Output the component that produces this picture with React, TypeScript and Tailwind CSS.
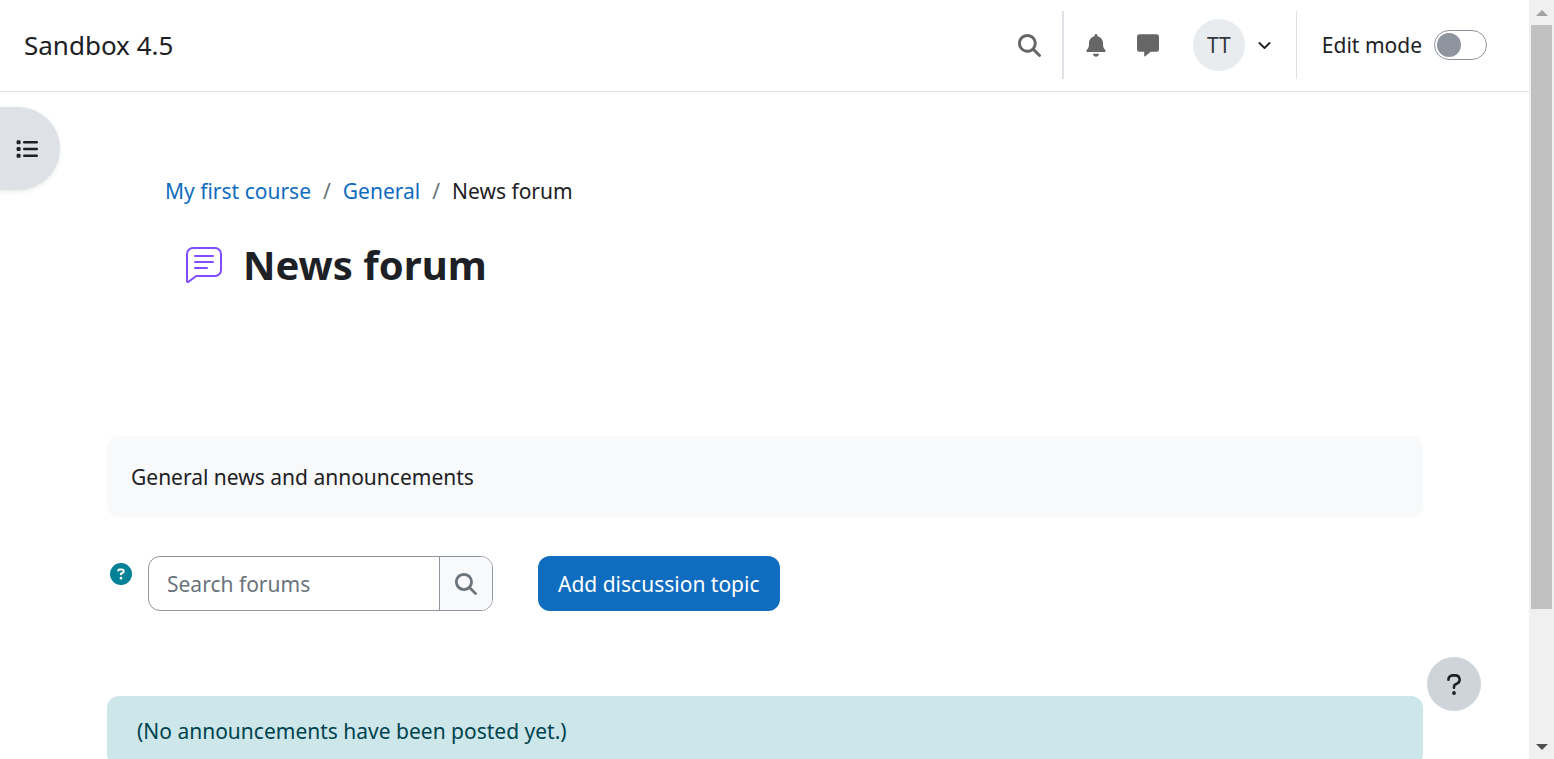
import { FaCircleQuestion, FaMagnifyingGlass } from "react-icons/fa6";

function BellIcon() {
  return (
    <svg viewBox="0 0 24 23" className="h-[23px] w-6" fill="currentColor">
      <path d="M12 0c.8 0 1.400.6 1.400 1.400v.8c3.300.7 5.600 3.500 5.600 6.900v1.700c0 2.100.8 3.600 2.200 5.200.9 1 .4 2.100-.7 2.100h-17c-1.100 0-1.600-1.100-.7-2.100C4.200 14.400 5 12.900 5 10.800V9.100c0-3.400 2.300-6.200 5.600-6.900v-.8C10.600.6 11.200 0 12 0Z" />
      <path d="M9 19.800h6c0 1.700-1.300 2.900-3 2.900s-3-1.200-3-2.900Z" />
    </svg>
  );
}

function MessageIcon() {
  return (
    <svg viewBox="0 0 24 23" className="h-[23px] w-6" fill="currentColor">
      <path d="M3.500.3h17A2.500 2.500 0 0 1 23 2.800v12.400a2.500 2.500 0 0 1-2.500 2.500h-5.800l-5.500 4.500c-.6.500-1 .2-1-.4v-4.100H3.500A2.500 2.500 0 0 1 1 15.200V2.800A2.500 2.500 0 0 1 3.500.3Z" />
    </svg>
  );
}

function ListIcon() {
  return (
    <svg viewBox="0 0 22 18" className="h-[18px] w-[22px]" fill="currentColor">
      <rect x="0.600" y="0.200" width="4" height="4" rx="1.200" />
      <rect x="0.600" y="7" width="4" height="4" rx="1.200" />
      <rect x="0.600" y="13.800" width="4" height="4" rx="1.200" />
      <rect x="7" y="1" width="15" height="2.400" rx="1.200" />
      <rect x="7" y="7.800" width="15" height="2.400" rx="1.200" />
      <rect x="7" y="14.600" width="15" height="2.400" rx="1.200" />
    </svg>
  );
}

function UserMenu() {
  return (
    <button type="button" aria-label="User menu" className="flex items-center gap-[13px]">
      <span className="flex size-[52px] items-center justify-center rounded-full bg-[#e9ecef] text-[#343a40]">TT</span>
      <svg viewBox="0 0 13 9" className="h-[9px] w-[13px]" fill="none" stroke="#1d2125" strokeWidth="1.800" strokeLinecap="round" strokeLinejoin="round">
        <path d="M1.400 2 6.500 7l5.100-5" />
      </svg>
    </button>
  );
}

function Header() {
  return (
    <header className="flex h-[92px] shrink-0 items-center border-b border-[#dee2e6] pr-[42px] pb-px pl-6">
      <a href="#home" className="text-[26px]">Sandbox 4.5</a>
      <div className="ml-auto flex h-[68px] items-center">
        <button type="button" aria-label="Search" className="pr-[21px] text-[23px] text-[#666]">
          <FaMagnifyingGlass />
        </button>
        <div className="flex h-full items-center border-l-2 border-[#dee2e6] pr-[25px] pl-5 text-[#666]">
          <button type="button" aria-label="Notifications">
            <BellIcon />
          </button>
          <button type="button" aria-label="Messages" className="mr-[33px] ml-7">
            <MessageIcon />
          </button>
          <UserMenu />
        </div>
        <label className="flex h-full items-center gap-3 border-l border-[#dee2e6] pl-[25px]">
          <span>Edit mode</span>
          <span className="relative flex">
            <input type="checkbox" role="switch" className="peer h-[30px] w-[53px] appearance-none rounded-full border border-[#8f959e] bg-white" />
            <span className="absolute top-[3px] left-[3px] size-6 rounded-full bg-[#8f959e] peer-checked:left-[26px]" />
          </span>
        </label>
      </div>
    </header>
  );
}

function Breadcrumb() {
  return (
    <nav aria-label="Breadcrumb">
      <ol className="flex gap-3">
        <li><a href="#course" className="text-[#0f6cbf]">My first course</a></li>
        <li aria-hidden="true" className="text-[#6a737b]">/</li>
        <li><a href="#general" className="text-[#0f6cbf]">General</a></li>
        <li aria-hidden="true" className="text-[#6a737b]">/</li>
        <li>News forum</li>
      </ol>
    </nav>
  );
}

function ForumIcon() {
  return (
    <svg viewBox="0 0 36 36" className="size-9" fill="none" stroke="#7f4dff" strokeWidth="2" strokeLinecap="round" strokeLinejoin="round">
      <path d="M1 34V7a6 6 0 0 1 6-6h22a6 6 0 0 1 6 6v16a6 6 0 0 1-6 6H11a3 3 0 0 0-1.900.7l-6.500 5.100c-.7.600-1.600.300-1.600-.8Z" />
      <path d="M9 9h18M9 15h18M9 21h12" />
    </svg>
  );
}

function QuestionMark() {
  return (
    <svg viewBox="0 0 14 21" className="h-[21px] w-[14px]" fill="none" stroke="currentColor" strokeWidth="2.600" strokeLinecap="round" strokeLinejoin="round">
      <path d="M1.400 5.800A4.300 4.300 0 0 1 5.700 1.400h2.600a4.200 4.200 0 0 1 2.100 7.900L8.100 10.700A2.200 2.200 0 0 0 7 12.600v1.200" />
      <circle cx="7" cy="19" r="1.900" fill="currentColor" stroke="none" />
    </svg>
  );
}

function ForumTools() {
  return (
    <div className="mt-[39px] flex items-start">
      <button type="button" aria-label="Help with Search" className="mt-[7px] ml-[3px] text-[22px] text-[#008196]">
        <FaCircleQuestion />
      </button>
      <form className="ml-4 flex h-[55px] w-[345px] overflow-hidden rounded-xl border border-[#8f959e]">
        <input type="text" aria-label="Search forums" placeholder="Search forums" className="min-w-0 flex-1 px-[18px] outline-none placeholder:text-[#6a737b]" />
        <button type="button" aria-label="Search forums" className="flex w-[53px] items-center justify-center border-l border-[#8f959e] bg-[#f8f9fa] text-[22px] text-[#6a737b]">
          <FaMagnifyingGlass />
        </button>
      </form>
      <button type="button" className="ml-[45px] h-[55px] rounded-xl bg-[#0f6cbf] px-5 text-white">Add discussion topic</button>
    </div>
  );
}

function Scrollbar() {
  return (
    <div aria-hidden="true" className="flex w-[25px] shrink-0 flex-col items-center bg-[#f0f0f0]">
      <div className="flex h-[25px] shrink-0 items-center">
        <svg viewBox="0 0 12 6" className="h-[6px] w-3" fill="#a3a3a3"><path d="M6 0l6 6H0z" /></svg>
      </div>
      <div className="h-[77%] w-[21px] bg-[#c1c1c1]" />
      <div className="mt-auto flex h-[25px] shrink-0 items-center">
        <svg viewBox="0 0 12 6" className="h-[6px] w-3" fill="#505050"><path d="M0 0h12L6 6z" /></svg>
      </div>
    </div>
  );
}

export default function App() {
  return (
    <div className="flex h-screen overflow-hidden bg-white font-['Segoe_UI','Noto_Sans',sans-serif] text-[21px] leading-[34px] text-[#1d2125]">
      <div className="relative flex min-w-0 flex-1 flex-col overflow-hidden">
        <Header />
        <button type="button" aria-label="Open course index" className="absolute top-[107px] left-0 flex h-[83px] w-[60px] items-center rounded-r-full bg-[#dee2e6] pl-4 shadow-[0_2px_4px_rgba(0,0,0,0.08)]">
          <ListIcon />
        </button>
        <main className="pr-[106px] pl-[107px]">
          <div className="pt-[82px] pl-[58px]">
            <Breadcrumb />
            <div className="mt-6 flex items-center gap-[21px] pl-[21px]">
              <ForumIcon />
              <h1 className="text-[40px] leading-[66px] font-bold">News forum</h1>
            </div>
          </div>
          <p className="mt-[138px] rounded-xl bg-[#f8f9fa] px-6 pt-6 pb-[23px]">General news and announcements</p>
          <ForumTools />
          <div role="alert" className="mt-[85px] rounded-xl bg-[#cce6ea] px-[30px] py-[18px] text-[#00434e]">(No announcements have been posted yet.)</div>
        </main>
        <button type="button" aria-label="Show footer" className="absolute right-12 bottom-12 flex size-[54px] items-center justify-center rounded-full bg-[#ced4da]">
          <QuestionMark />
        </button>
      </div>
      <Scrollbar />
    </div>
  );
}
